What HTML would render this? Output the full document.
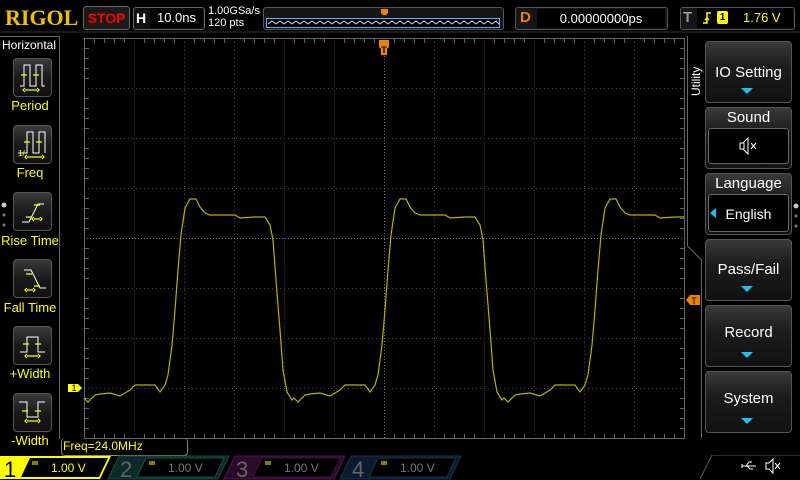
<!DOCTYPE html>
<html><head><meta charset="utf-8"><style>
*{margin:0;padding:0;box-sizing:border-box}
body{width:800px;height:480px;background:#000;overflow:hidden;position:relative;font-family:"Liberation Sans",sans-serif;color:#fff}
.a{position:absolute}
.btn{position:absolute;border:1px solid #555;border-radius:4px;background:linear-gradient(#3a3a3a,#1a1a1a 50%,#111)}
.lbl{position:absolute;color:#ff0;font-size:13px;text-align:center;width:60px;left:0}
.rb{position:absolute;left:705px;width:87px;border:1px solid #555;border-radius:4px;background:linear-gradient(#3a3a3a,#1c1c1c 40%,#111);color:#fff;font-size:15px;text-align:center}
.tri{position:absolute;left:36px;width:0;height:0;border-left:6px solid transparent;border-right:6px solid transparent;border-top:6px solid #1ec0f0}
</style></head><body>
<!-- top bar -->
<div class="a" style="left:5px;top:5px;font-family:'Liberation Serif',serif;font-weight:bold;font-size:22px;color:#f0c000">RIGOL</div>
<div class="a" style="left:83px;top:6px;width:47px;height:24px;border:1px solid #666;border-radius:3px;background:#1a1a1a;color:#f00;font-weight:bold;font-size:14px;text-align:center;line-height:22px">STOP</div>
<div class="a" style="left:133px;top:7px;width:72px;height:23px;border:1px solid #666;border-radius:3px;background:#111"></div>
<div class="a" style="left:136px;top:10px;font-weight:bold;font-size:14px">H</div>
<div class="a" style="left:150px;top:8px;width:53px;height:20px;background:#000;border-radius:2px;font-size:13px;text-align:center;line-height:20px">10.0ns</div>
<div class="a" style="left:208px;top:5px;font-size:11px;line-height:12px">1.00GSa/s<br>120 pts</div>
<div class="a" style="left:263px;top:7px;width:241px;height:23px;border:1px solid #555;border-radius:3px;background:#151515"></div>
<div class="a" style="left:266px;top:18px;width:234px;height:10px;border:1px solid #6af;background:#000"></div>
<svg class="a" style="left:0;top:0" width="800" height="40">
<polyline fill="none" stroke="#ddd" stroke-width="1" points="268,24 272,21 276,24 280,21 284,24 288,21 292,24 296,21 300,24 304,21 308,24 312,21 316,24 320,21 324,24 328,21 332,24 336,21 340,24 344,21 348,24 352,21 356,24 360,21 364,24 368,21 372,24 376,21 380,24 384,21 388,24 392,21 396,24 400,21 404,24 408,21 412,24 416,21 420,24 424,21 428,24 432,21 436,24 440,21 444,24 448,21 452,24 456,21 460,24 464,21 468,24 472,21 476,24 480,21 484,24 488,21 492,24 496,21 499,24"/>
<path d="M381 9h7v4l-2 2h-3l-2-2z" fill="#f08000"/>
<line x1="0" y1="32" x2="800" y2="32" stroke="#333"/>
<path d="M703 19h4v-9h3M707 15l2-2" stroke="#ff0" fill="none" stroke-width="1.5"/>
</svg>
<div class="a" style="left:515px;top:7px;width:153px;height:23px;border:1px solid #555;border-radius:3px;background:#151515"></div>
<div class="a" style="left:520px;top:9px;color:#f08000;font-weight:bold;font-size:15px">D</div>
<div class="a" style="left:537px;top:9px;width:128px;height:19px;background:#000;font-size:13px;text-align:center;line-height:19px">0.00000000ps</div>
<div class="a" style="left:680px;top:7px;width:115px;height:23px;border:1px solid #555;border-radius:3px;background:#151515"></div>
<div class="a" style="left:683px;top:9px;color:#999;font-weight:bold;font-size:15px">T</div>
<div class="a" style="left:697px;top:8px;width:96px;height:20px;background:#000"></div>
<svg class="a" style="left:697px;top:8px" width="20" height="20"><path d="M6 15h4v-10h4M10 10l-2 2M10 10l2 2" stroke="#ff0" fill="none" stroke-width="1.5"/></svg>
<div class="a" style="left:717px;top:11px;width:11px;height:13px;background:#ff0;border-radius:2px;color:#000;font-size:10px;text-align:center;line-height:13px;font-weight:bold">1</div>
<div class="a" style="left:743px;top:10px;color:#ff0;font-size:13px">1.76 V</div>

<!-- left panel -->
<div class="a" style="left:0;top:36px;width:60px;height:403px;border-right:1px solid #666;border-top:1px solid #666"></div>
<div class="a" style="left:2px;top:38px;font-size:12px">Horizontal</div>
<div class="btn" style="left:13px;top:58px;width:39px;height:39px"></div>
<div class="btn" style="left:13px;top:125px;width:39px;height:39px"></div>
<div class="btn" style="left:13px;top:192px;width:39px;height:39px"></div>
<div class="btn" style="left:13px;top:259px;width:39px;height:39px"></div>
<div class="btn" style="left:13px;top:326px;width:39px;height:39px"></div>
<div class="btn" style="left:13px;top:393px;width:39px;height:39px"></div>
<div class="lbl" style="top:98px">Period</div>
<div class="lbl" style="top:165px">Freq</div>
<div class="lbl" style="top:233px">Rise Time</div>
<div class="lbl" style="top:300px">Fall Time</div>
<div class="lbl" style="top:366px">+Width</div>
<div class="lbl" style="top:433px">-Width</div>
<svg class="a" style="left:0;top:0" width="60" height="440">
<g fill="none" stroke="#fff" stroke-width="1">
<path d="M20 86h4v-21h6v21h6v-21h6v21h3"/>
<path d="M18 153h9v-21h6v21h6v-21h6v21"/>
<path d="M22 222h7l9-18h6"/>
<path d="M24 270h7l9 18h6"/>
<path d="M20 352h7v-15h11v15h7"/>
<path d="M19 402h8v15h11v-15h7"/>
</g>
<g fill="none" stroke="#ff0" stroke-width="1.2">
<path d="M21 75h6M33 75h6M25 90h12M25 88l-2 2 2 2M37 88l2 2-2 2"/>
<path d="M24 142h6M36 142h6M27 157h15M27 155l-2 2 2 2M42 155l2 2-2 2"/>
<path d="M34 205h6M26 217h6M34 219h6M34 217l-2 2 2 2M40 217l2 2-2 2"/>
<path d="M26 274h6M34 286h6M27 290h6M27 288l-2 2 2 2M33 288l2 2-2 2"/>
<path d="M23 344h6M35 344h6M27 356h11M27 354l-2 2 2 2M38 354l2 2-2 2"/>
<path d="M22 411h6M35 411h6M27 421h11M27 419l-2 2 2 2M38 419l2 2-2 2"/>
</g>
<text x="18" y="156" font-size="8" fill="#ff0" font-family="Liberation Sans">1/</text>
<circle cx="4" cy="205" r="2.5" fill="#ccc"/><circle cx="4" cy="215" r="1.5" fill="#777"/><circle cx="4" cy="225" r="1.5" fill="#777"/>
</svg>

<!-- grid + waveform -->
<svg class="a" style="left:0;top:0" width="800" height="480">
<g stroke="#4a4a4a" stroke-width="1" stroke-dasharray="1,3">
<path d="M134.5 38v400M184.5 38v400M234.5 38v400M284.5 38v400M334.5 38v400M434.5 38v400M484.5 38v400M534.5 38v400M584.5 38v400M634.5 38v400"/>
<path d="M84 88.5h600M84 138.5h600M84 188.5h600M84 288.5h600M84 338.5h600M84 388.5h600"/>
</g>
<g stroke="#777" stroke-width="1" stroke-dasharray="1,2">
<path d="M384.5 38v400M84 238.5h600"/>
</g>
<rect x="84.5" y="38.5" width="600" height="400" fill="none" stroke="#666"/>
<g stroke="#666">
<path d="M94.5 39v4M104.5 39v4M114.5 39v4M124.5 39v4M144.5 39v4M154.5 39v4M164.5 39v4M174.5 39v4M194.5 39v4M204.5 39v4M214.5 39v4M224.5 39v4M244.5 39v4M254.5 39v4M264.5 39v4M274.5 39v4M294.5 39v4M304.5 39v4M314.5 39v4M324.5 39v4M344.5 39v4M354.5 39v4M364.5 39v4M374.5 39v4M394.5 39v4M404.5 39v4M414.5 39v4M424.5 39v4M444.5 39v4M454.5 39v4M464.5 39v4M474.5 39v4M494.5 39v4M504.5 39v4M514.5 39v4M524.5 39v4M544.5 39v4M554.5 39v4M564.5 39v4M574.5 39v4M594.5 39v4M604.5 39v4M614.5 39v4M624.5 39v4M644.5 39v4M654.5 39v4M664.5 39v4M674.5 39v4"/>
<path d="M94.5 434v4M104.5 434v4M114.5 434v4M124.5 434v4M144.5 434v4M154.5 434v4M164.5 434v4M174.5 434v4M194.5 434v4M204.5 434v4M214.5 434v4M224.5 434v4M244.5 434v4M254.5 434v4M264.5 434v4M274.5 434v4M294.5 434v4M304.5 434v4M314.5 434v4M324.5 434v4M344.5 434v4M354.5 434v4M364.5 434v4M374.5 434v4M394.5 434v4M404.5 434v4M414.5 434v4M424.5 434v4M444.5 434v4M454.5 434v4M464.5 434v4M474.5 434v4M494.5 434v4M504.5 434v4M514.5 434v4M524.5 434v4M544.5 434v4M554.5 434v4M564.5 434v4M574.5 434v4M594.5 434v4M604.5 434v4M614.5 434v4M624.5 434v4M644.5 434v4M654.5 434v4M664.5 434v4M674.5 434v4"/>
<path d="M85 48.5h4M85 58.5h4M85 68.5h4M85 78.5h4M85 98.5h4M85 108.5h4M85 118.5h4M85 128.5h4M85 148.5h4M85 158.5h4M85 168.5h4M85 178.5h4M85 198.5h4M85 208.5h4M85 218.5h4M85 228.5h4M85 248.5h4M85 258.5h4M85 268.5h4M85 278.5h4M85 298.5h4M85 308.5h4M85 318.5h4M85 328.5h4M85 348.5h4M85 358.5h4M85 368.5h4M85 378.5h4M85 398.5h4M85 408.5h4M85 418.5h4M85 428.5h4"/>
<path d="M680 48.5h4M680 58.5h4M680 68.5h4M680 78.5h4M680 98.5h4M680 108.5h4M680 118.5h4M680 128.5h4M680 148.5h4M680 158.5h4M680 168.5h4M680 178.5h4M680 198.5h4M680 208.5h4M680 218.5h4M680 228.5h4M680 248.5h4M680 258.5h4M680 268.5h4M680 278.5h4M680 298.5h4M680 308.5h4M680 318.5h4M680 328.5h4M680 348.5h4M680 358.5h4M680 368.5h4M680 378.5h4M680 398.5h4M680 408.5h4M680 418.5h4M680 428.5h4"/>
</g>
<polyline fill="none" stroke="#b4b400" stroke-width="1.2" points="84,398 88,402 95,395 100,394 110,393 120,396 130,390 135,385 155,385 160,392 165,385 168,375 172,345 175,310 178,270 181,235 185,208 190,199 196,199 200,207 205,213 210,215 235,215 240,218 255,217 265,217 270,225 273,240 276,280 280,330 283,370 287,392 292,400 294,398 298,402 305,395 310,394 320,393 330,396 340,390 345,385 365,385 370,392 375,385 378,375 382,345 385,310 388,270 391,235 395,208 400,199 406,199 410,207 415,213 420,215 445,215 450,218 465,217 475,217 480,225 483,240 486,280 490,330 493,370 497,392 502,400 504,398 508,402 515,395 520,394 530,393 540,396 550,390 555,385 575,385 580,392 585,385 588,375 592,345 595,310 598,270 601,235 605,208 610,199 616,199 620,207 625,213 630,215 655,215 660,218 675,217 684,217"/>
<path d="M379 40h10v7l-2 2v6h-6v-6l-2-2z" fill="#f08000"/>
<text x="384" y="53" font-size="9" fill="#000" text-anchor="middle" font-weight="bold" font-family="Liberation Sans">T</text>
<path d="M68 384h10l4 4-4 4h-10z" fill="#ff0"/>
<text x="74" y="391" font-size="9" fill="#000" text-anchor="middle" font-family="Liberation Sans">1</text>
<path d="M700 295h-10l-4 5 4 5h10z" fill="#f08000"/>
<text x="694" y="304" font-size="9" fill="#000" text-anchor="middle" font-family="Liberation Sans">T</text>
<path d="M687.5 36v210l14 14v178" fill="none" stroke="#666"/>
<text transform="translate(700,96) rotate(-90)" font-size="12" fill="#fff" font-family="Liberation Sans">Utility</text>
<circle cx="796" cy="206" r="2.5" fill="#ccc"/><circle cx="796" cy="216" r="1.5" fill="#777"/><circle cx="796" cy="226" r="1.5" fill="#777"/>
</svg>

<!-- right menu -->
<div class="rb" style="top:41px;height:62px"><div style="margin-top:22px">IO Setting</div></div>
<div class="tri" style="left:741px;top:88px"></div>
<div class="rb" style="top:107px;height:62px"><div style="margin-top:1px">Sound</div></div>
<div class="a" style="left:708px;top:128px;width:81px;height:36px;border:1px solid #666;border-radius:3px;background:#000"></div>
<svg class="a" style="left:738px;top:136px" width="24" height="20"><path d="M2 7h3l5-5v16l-5-5H2z" fill="none" stroke="#fff"/><path d="M6 7v6" stroke="#fff"/><path d="M13 7l5 6M18 7l-5 6" stroke="#fff"/></svg>
<div class="rb" style="top:173px;height:62px"><div style="margin-top:1px">Language</div></div>
<div class="a" style="left:708px;top:194px;width:81px;height:38px;border:1px solid #666;border-radius:3px;background:#000;text-align:center;line-height:38px;font-size:14px">English</div>
<div class="a" style="left:710px;top:208px;width:0;height:0;border-top:5px solid transparent;border-bottom:5px solid transparent;border-right:6px solid #1ec0f0"></div>
<div class="rb" style="top:239px;height:62px"><div style="margin-top:21px">Pass/Fail</div></div>
<div class="tri" style="left:741px;top:286px"></div>
<div class="rb" style="top:305px;height:62px"><div style="margin-top:18px">Record</div></div>
<div class="tri" style="left:741px;top:352px"></div>
<div class="rb" style="top:371px;height:62px"><div style="margin-top:18px">System</div></div>
<div class="tri" style="left:741px;top:418px"></div>

<!-- bottom -->
<div class="a" style="left:61px;top:438px;width:127px;height:18px;border:1px solid #888;border-radius:4px;border-top:none;color:#ff0;font-size:12px;padding-left:1px;line-height:16px">Freq=24.0MHz</div>
<svg class="a" style="left:0;top:455px" width="800" height="25">
<path d="M0 1h111l-11 23H0z" fill="#ff0"/>
<path d="M30 3h78l-9 19H21z" fill="#000"/>
<path d="M119 1h110l-11 23h-110z" fill="#0c2a26" stroke="#1a4a44"/>
<path d="M146 3h78l-9 19h-78z" fill="#000" stroke="#154"/>
<path d="M235 1h110l-11 23h-110z" fill="#2a0c2a" stroke="#4a1a4a"/>
<path d="M262 3h78l-9 19h-78z" fill="#000" stroke="#414"/>
<path d="M351 1h110l-11 23h-110z" fill="#0c1a2e" stroke="#1a3050"/>
<path d="M378 3h78l-9 19h-78z" fill="#000" stroke="#134"/>
<path d="M700 24l12-24h88" fill="none" stroke="#555"/>
<g font-family="Liberation Sans" font-size="12">
<text x="4" y="22" font-size="22" fill="#000">1</text>
<text x="51" y="17" fill="#ff0">1.00 V</text>
<text x="120" y="22" font-size="22" fill="#666">2</text>
<text x="168" y="17" fill="#777">1.00 V</text>
<text x="236" y="22" font-size="22" fill="#666">3</text>
<text x="284" y="17" fill="#777">1.00 V</text>
<text x="352" y="22" font-size="22" fill="#666">4</text>
<text x="400" y="17" fill="#777">1.00 V</text>
</g>
<path d="M32 7h6M32 9h6M149 7h6M149 9h6M265 7h6M265 9h6M381 7h6M381 9h6" stroke="#ff0" stroke-width="1"/>
<path d="M742 11h14M746 11l3-4h3M747 11l3 3h3M742 9v4" stroke="#fff" fill="none"/>
<path d="M766 8h3l4-4v14l-4-4h-3z" fill="none" stroke="#fff"/>
<path d="M775 8l5 6M780 8l-5 6" stroke="#fff"/>
</svg>
</body></html>
